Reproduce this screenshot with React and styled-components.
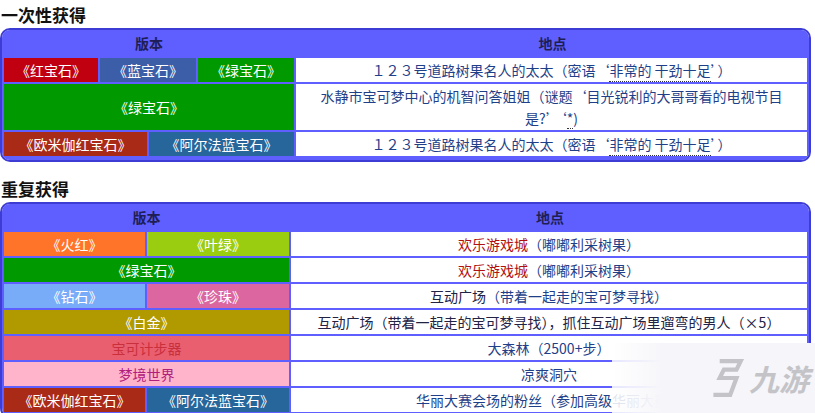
import React from "react";
import styled, { createGlobalStyle } from "styled-components";

const Global = createGlobalStyle`
  body { margin: 0; background: #fff; font-family: "Noto Sans CJK SC", "Noto Sans", sans-serif; overflow: hidden; }
`;
const Page = styled.div` width: 815px; height: 413px; position: relative; overflow: hidden; `;
const H = styled.h3` margin: 0; height: 28px; font-size: 17px; font-weight: 700; line-height: 30px; color: #111; padding-left: 1px; `;
const Table = styled.div`
  width: 811px; margin-bottom: 12px; background: #5f5fff; border: 2px solid #3d3dd6; border-radius: 10px;
  display: grid; grid-template-columns: ${p => p.$left}px 1fr; gap: 2px; padding: 0 0 4px 2px; box-sizing: border-box;
  background-clip: padding-box; overflow: hidden;
`;
const Head = styled.div` height: 26px; display: flex; align-items: center; justify-content: center; font-size: 14px; font-weight: 700; color: #1e1e55; `;
const Ver = styled.div` display: grid; grid-template-columns: ${p => p.$cols}; gap: 2px; `;
const VCell = styled.div`
  background: ${p => p.$bg}; color: ${p => p.$fg || "#fff"}; font-size: 14px; display: flex; align-items: center; justify-content: center;
  min-height: ${p => p.$h || 24}px;
`;
const Loc = styled.div`
  background: #fff; color: #1f3f88; font-size: 14px; line-height: 22px; display: flex; align-items: center; justify-content: center;
  text-align: center; padding: 0 10px; min-height: ${p => p.$h || 24}px; margin-right: 2px;
`;
const Red = styled.span` color: #b01010; `;
const Dark = styled.span` color: #222244; `;
const Dot = styled.span` border-bottom: 1px dotted #333; `;
const Mark = styled.div`
  position: absolute; left: 612px; top: 343px; width: 203px; height: 70px;
  background: linear-gradient(90deg, rgba(255,255,255,0.85), rgba(246,246,250,1) 25%);
  display: flex; align-items: center; justify-content: flex-end; padding-right: 6px; box-sizing: border-box; gap: 2px;
  color: #c4c4c8; font-size: 30px; font-style: italic; font-weight: 700;
`;

const T1 = () => (
  <Table $left={290}>
    <Head>版本</Head><Head>地点</Head>
    <Ver $cols="94px 96px 96px">
      <VCell $bg="#c00010">《红宝石》</VCell><VCell $bg="#3c5ea8">《蓝宝石》</VCell><VCell $bg="#009a00">《绿宝石》</VCell>
    </Ver>
    <Loc>１２３号道路树果名人的太太（密语‘<Dot>非常的 干劲十足</Dot>’）</Loc>
    <Ver $cols="1fr"><VCell $bg="#009a00" $h={46}>《绿宝石》</VCell></Ver>
    <Loc $h={46}><span>水静市宝可梦中心的机智问答姐姐（谜题‘目光锐利的大哥哥看的电视节目<br />是?’‘<Dot>*</Dot>)</span></Loc>
    <Ver $cols="143px 145px">
      <VCell $bg="#aa2a18">《欧米伽红宝石》</VCell><VCell $bg="#26669a">《阿尔法蓝宝石》</VCell>
    </Ver>
    <Loc>１２３号道路树果名人的太太（密语‘<Dot>非常的 干劲十足</Dot>’）</Loc>
  </Table>
);

const T2 = () => (
  <Table $left={285}>
    <Head>版本</Head><Head>地点</Head>
    <Ver $cols="141px 142px"><VCell $bg="#ff7428">《火红》</VCell><VCell $bg="#9acc10">《叶绿》</VCell></Ver>
    <Loc><Red>欢乐游戏城</Red>（嘟嘟利采树果）</Loc>
    <Ver $cols="1fr"><VCell $bg="#009a00">《绿宝石》</VCell></Ver>
    <Loc><Red>欢乐游戏城</Red>（嘟嘟利采树果）</Loc>
    <Ver $cols="141px 142px"><VCell $bg="#78acf8">《钻石》</VCell><VCell $bg="#dc66a0">《珍珠》</VCell></Ver>
    <Loc><Dark>互动广场</Dark>（带着一起走的宝可梦寻找）</Loc>
    <Ver $cols="1fr"><VCell $bg="#b09a00">《白金》</VCell></Ver>
    <Loc><Dark>互动广场（带着一起走的宝可梦寻找），抓住互动广场里遛弯的男人（×5）</Dark></Loc>
    <Ver $cols="1fr"><VCell $bg="#ea5f70" $fg="#c8303c">宝可计步器</VCell></Ver>
    <Loc>大森林（2500+步）</Loc>
    <Ver $cols="1fr"><VCell $bg="#ffb4cc" $fg="#b0207a">梦境世界</VCell></Ver>
    <Loc>凉爽洞穴</Loc>
    <Ver $cols="141px 142px"><VCell $bg="#aa2a18">《欧米伽红宝石》</VCell><VCell $bg="#26669a">《阿尔法蓝宝石》</VCell></Ver>
    <Loc>华丽大赛会场的粉丝（参加高级华丽大赛）</Loc>
  </Table>
);

export default function App() {
  return (
    <Page>
      <Global />
      <H>一次性获得</H>
      <T1 />
      <H>重复获得</H>
      <T2 />
      <Mark>
        <svg width="42" height="42" viewBox="0 0 40 40" fill="none" stroke="#c4c4c8" strokeWidth="4">
          <path d="M14 4 L34 4 L30 12 L18 12 L14 20 L30 20 L24 36 L8 36" />
        </svg>
        <span>九游</span>
      </Mark>
    </Page>
  );
}
